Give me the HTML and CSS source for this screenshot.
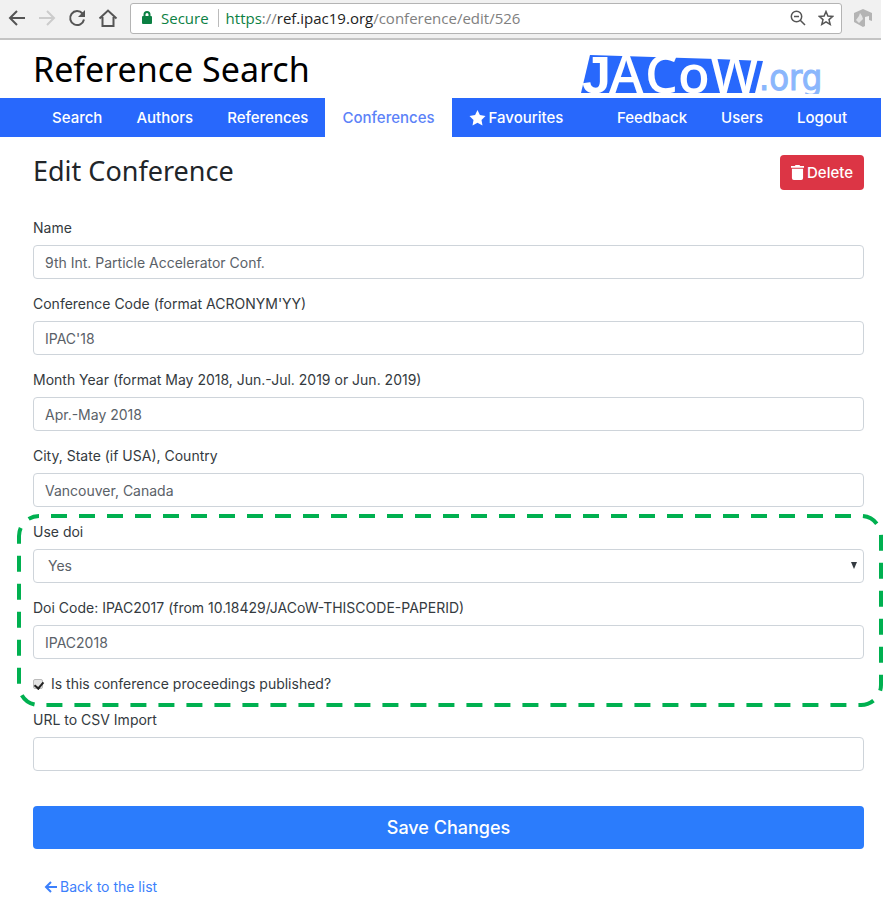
FILE: index.html
```html
<!DOCTYPE html>
<html lang="en">
<head>
    <meta charset="UTF-8">
    <meta name="viewport" content="width=device-width, initial-scale=1.0">
    <title>Edit Conference</title>
    <link rel="stylesheet" href="styles.css">
</head>
<body>
    <div class="browser-bar">
        <button class="bar-button" type="button" aria-label="Back">
            <svg width="18" height="18" viewBox="0 0 18 18"><path d="M17 9H2M9 2L2 9l7 7" /></svg>
        </button>
        <button class="bar-button" type="button" aria-label="Forward" disabled>
            <svg width="18" height="18" viewBox="0 0 18 18"><path d="M1 9h15M9 2l7 7-7 7" /></svg>
        </button>
        <button class="bar-button" type="button" aria-label="Reload">
            <svg width="18" height="18" viewBox="0 0 18 18"><path d="M14.500 4.500A7 7 0 1 0 16 10.500" /><path class="solid" d="M17 1v7h-7z" /></svg>
        </button>
        <button class="bar-button" type="button" aria-label="Home">
            <svg width="20" height="18" viewBox="0 0 20 18"><path d="M1.500 9.500L10 1.500l8.500 8M4.500 8v9h11V8" /></svg>
        </button>
        <div class="address-box">
            <svg class="lock" width="10" height="14" viewBox="0 0 10 14"><path class="shackle" d="M2.500 7V3.500a2.500 2.500 0 0 1 5 0V7" /><rect y="5" width="10" height="8" rx="1" /></svg>
            <span class="secure">Secure</span>
            <div class="url" role="textbox" aria-label="Address" tabindex="0"><span class="scheme">https</span>://<span class="host">ref.ipac19.org</span>/conference/edit/526</div>
            <button class="bar-button" type="button" aria-label="Zoom">
                <svg width="16" height="16" viewBox="0 0 16 16"><path class="thin" d="M10 10l5 5M4 6.500h5" /><circle class="thin" cx="6.500" cy="6.500" r="5.200" /></svg>
            </button>
            <button class="bar-button" type="button" aria-label="Bookmark this page">
                <svg width="16" height="16" viewBox="0 0 16 16"><path class="thin" d="M8 1.500l1.900 4.500 4.800.400-3.700 3.200 1.200 4.800L8 11.800l-4.200 2.600L5 9.600 1.300 6.400 6.100 6z" /></svg>
            </button>
        </div>
        <button class="bar-button extension" type="button" aria-label="Extension">
            <svg width="18" height="18" viewBox="0 0 18 18"><path fill="#b4b4b4" d="M0 4l9-4 9 4v8l-3-1V7l-4 1v9l-2 1-9-5z" /><path fill="#e4e4e4" d="M2 11l3-4 1-3 2 3 1 3-4 4z" /></svg>
        </button>
    </div>

    <header class="site-header">
        <h1>Reference Search</h1>
        <a href="#" class="logo" aria-label="JACoW.org">
            <svg width="242" height="39" viewBox="0 0 242 39">
                <path class="logo-back" d="M9 0l126 4 47 2-8 32H0z" />
                <g class="logo-letters">
                    <text class="logo-j" x="1" y="38">J</text>
                    <text x="28" y="38">A</text>
                    <text x="64" y="38">C</text>
                    <text x="97" y="38">o</text>
                    <text x="129" y="38">W</text>
                </g>
                <text class="logo-org" x="178" y="35">.org</text>
            </svg>
        </a>
    </header>

    <nav class="navbar">
        <a href="#">Search</a>
        <a href="#">Authors</a>
        <a href="#">References</a>
        <a href="#" class="active">Conferences</a>
        <a href="#"><svg class="icon" width="17" height="16" viewBox="0 0 17 16"><path d="M8.500 0l2.400 5.100 5.600.800-4 4 1 5.600-5-2.700-5 2.700 1-5.600-4-4 5.600-.800z" /></svg>Favourites</a>
        <div class="nav-right">
            <a href="#">Feedback</a>
            <a href="#">Users</a>
            <a href="#">Logout</a>
        </div>
    </nav>

    <main class="container">
        <div class="title-row">
            <h2>Edit Conference</h2>
            <button class="delete-button" type="button"><svg class="icon" width="13" height="15" viewBox="0 0 14 16"><path d="M0 1h4l1-1h4l1 1h4v2H0zM1 4h12v10q0 2-2 2H3q-2 0-2-2z" /></svg>Delete</button>
        </div>

        <form>
            <div class="form-group">
                <label for="name">Name</label>
                <input type="text" id="name" value="9th Int. Particle Accelerator Conf.">
            </div>
            <div class="form-group">
                <label for="code">Conference Code (format ACRONYM'YY)</label>
                <input type="text" id="code" value="IPAC'18">
            </div>
            <div class="form-group">
                <label for="year">Month Year (format May 2018, Jun.-Jul. 2019 or Jun. 2019)</label>
                <input type="text" id="year" value="Apr.-May 2018">
            </div>
            <div class="form-group">
                <label for="location">City, State (if USA), Country</label>
                <input type="text" id="location" value="Vancouver, Canada">
            </div>
            <div class="doi-section">
                <svg class="outline"><rect x="2" y="2" rx="20" /></svg>
                <div class="form-group">
                    <label for="useDoi">Use doi</label>
                    <div class="select-wrap">
                        <select id="useDoi">
                            <option>Yes</option>
                            <option>No</option>
                        </select>
                    </div>
                </div>
                <div class="form-group">
                    <label for="doiCode">Doi Code: IPAC2017 (from 10.18429/JACoW-THISCODE-PAPERID)</label>
                    <input type="text" id="doiCode" value="IPAC2018">
                </div>
                <div class="form-check">
                    <input type="checkbox" id="published" checked>
                    <label for="published">Is this conference proceedings published?</label>
                </div>
            </div>
            <div class="form-group">
                <label for="csvUrl">URL to CSV Import</label>
                <input type="text" id="csvUrl">
            </div>
            <button class="save-button" type="submit">Save Changes</button>
        </form>
        <a href="#" class="back-link"><svg width="13" height="12" viewBox="0 0 13 12"><path d="M13 6H2M7 1L2 6l5 5" /></svg>Back to the list</a>
    </main>
</body>
</html>
```
FILE: styles.css
```css
* {
    box-sizing: border-box;
}
body {
    font-family: Inter, sans-serif;
    font-size: 14px;
    line-height: 22px;
    color: #343a40;
    background: #fff;
    margin: 0;
    padding-right: 2px;
}
button, input, select {
    font: inherit;
}
a {
    text-decoration: none;
}
h1, h2 {
    font-family: "Noto Sans", sans-serif;
    font-weight: normal;
    margin: 0;
}

/* Browser bar */
.browser-bar {
    display: flex;
    align-items: center;
    gap: 12px;
    height: 40px;
    padding: 0 9px 2px 8px;
    background: #f1f1f1;
    border-bottom: 2px solid #c4c4c4;
}
.bar-button {
    display: flex;
    padding: 0;
    border: none;
    background: none;
}
.bar-button svg {
    fill: none;
    stroke: #555;
    stroke-width: 2;
}
.bar-button:disabled svg {
    stroke: #ccc;
}
.bar-button .solid {
    fill: #555;
    stroke: none;
}
.bar-button .thin {
    stroke-width: 1.5;
}
.extension svg {
    stroke: none;
}
.address-box {
    flex: 1;
    display: flex;
    align-items: center;
    gap: 12px;
    height: 31px;
    padding: 0 7px 0 11px;
    background: #fff;
    border: 1px solid #b4b4b4;
    border-radius: 3px;
    font-family: "Open Sans", "Noto Sans", sans-serif;
    font-size: 15px;
}
.lock {
    fill: #0b8043;
    margin-right: -3px;
}
.shackle {
    fill: none;
    stroke: #0b8043;
    stroke-width: 2;
}
.secure {
    color: #0b8043;
    margin-right: -3px;
}
.url {
    flex: 1;
    line-height: 18px;
    padding-left: 7px;
    border-left: 1px solid #bbb;
    color: #808080;
}
.scheme {
    color: #0b8043;
}
.host {
    color: #222;
}

/* Header */
.site-header {
    display: flex;
    justify-content: space-between;
    align-items: center;
    height: 58px;
    padding: 0 58px 0 33px;
}
h1 {
    font-size: 34px;
    line-height: 58px;
    color: #000;
}
.logo {
    display: flex;
    padding-top: 10px;
}
.logo-back {
    fill: #2868fc;
}
.logo-letters {
    fill: #fff;
    font-family: "Open Sans", "Noto Sans", sans-serif;
    font-size: 52px;
    font-weight: 600;
}
.logo-j {
    font-family: "Liberation Sans", sans-serif;
}
.logo-org {
    fill: #8ab6fc;
    stroke: #8ab6fc;
    stroke-width: 1;
    font-family: "DejaVu Sans Condensed", "DejaVu Sans", sans-serif;
    font-size: 36px;
}
.navbar {
    display: flex;
    height: 39px;
    padding: 0 17px 0 35px;
    background: #2868fc;
    font-size: 15px;
    font-weight: 500;
}
.navbar a {
    display: flex;
    align-items: center;
    padding: 0 17px;
    color: #fff;
}
.navbar .active {
    background: #fff;
    color: #5c82f8;
}
.nav-right {
    display: flex;
    margin-left: auto;
}
.icon {
    fill: currentColor;
    margin-right: 3px;
}

/* Edit form */
.container {
    padding: 18px 17px 4px 33px;
}
.title-row {
    display: flex;
    justify-content: space-between;
    margin-bottom: 27px;
}
h2 {
    font-size: 27px;
    line-height: 32px;
    color: #212529;
}
.delete-button {
    display: flex;
    align-items: center;
    height: 35px;
    padding: 0 11px;
    background: #dc3545;
    color: #fff;
    border: none;
    border-radius: 4px;
    font-size: 15px;
    font-weight: 500;
}
.form-group {
    margin-bottom: 14px;
}
.form-group label {
    display: block;
    margin-bottom: 6px;
}
.form-group input, .form-group select {
    display: block;
    width: 100%;
    height: 34px;
    padding: 0 11px;
    background: #fff;
    border: 1px solid #ced4da;
    border-radius: 4px;
    color: #5a6168;
}
.form-group select {
    appearance: none;
    padding: 0 14px;
}
.select-wrap {
    position: relative;
}
.select-wrap::after {
    content: "";
    position: absolute;
    top: 13px;
    right: 7px;
    border: 3px solid transparent;
    border-top: 7px solid #343a40;
    pointer-events: none;
}
.doi-section {
    position: relative;
}
.outline {
    position: absolute;
    top: -7px;
    left: -16px;
    width: calc(100% + 35px);
    height: calc(100% + 19px);
    pointer-events: none;
}
.outline rect {
    width: calc(100% - 4px);
    height: calc(100% - 4px);
    fill: none;
    stroke: #00b050;
    stroke-width: 4;
    stroke-dasharray: 16 12;
    stroke-dashoffset: 16;
}
.form-check {
    display: flex;
    align-items: center;
    gap: 8px;
    margin-bottom: 14px;
}
.form-check input {
    appearance: none;
    width: 10px;
    height: 10px;
    margin: 0;
    background: #e4e4e4;
    border: 1px solid #bbb;
    border-radius: 2px;
}
.form-check input:checked::before {
    content: "";
    display: block;
    width: 4px;
    height: 7px;
    margin: 0 0 0 2px;
    border: solid #222;
    border-width: 0 2px 2px 0;
    transform: rotate(40deg);
}
.save-button {
    display: block;
    width: 100%;
    height: 43px;
    margin-top: 35px;
    background: #2b7cfc;
    color: #fff;
    border: none;
    border-radius: 4px;
    font-size: 18px;
    font-weight: 500;
}
.back-link {
    display: inline-flex;
    align-items: center;
    gap: 3px;
    margin: 27px 11px 0;
    color: #3c80fc;
}
.back-link svg {
    fill: none;
    stroke: currentColor;
    stroke-width: 2;
}
```
